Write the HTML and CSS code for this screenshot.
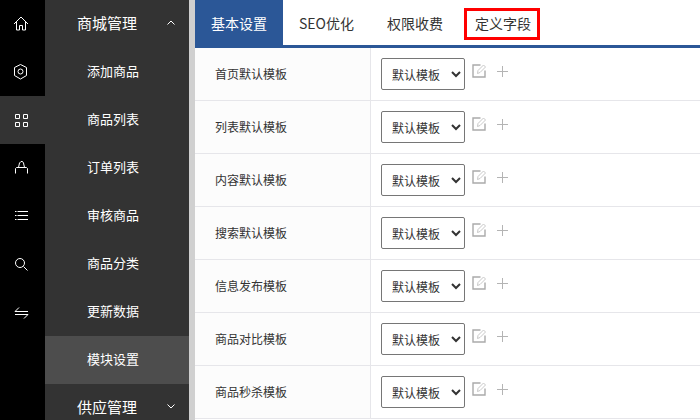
FILE: index.html
```html
<!DOCTYPE html>
<html lang="zh-CN">
<head>
<meta charset="utf-8">
<title>模块设置</title>
<link rel="stylesheet" href="styles.css">
</head>
<body>
<div class="app">
  <nav class="rail">
    <a class="rail-item"><svg viewBox="0 0 16 16" class="ico"><path d="M1 8 8 1 15 8M3.500 6V14H6.500V9.500H9.500V14H12.500V6"/></svg></a>
    <a class="rail-item"><svg viewBox="0 0 16 16" class="ico"><path d="M7.500 0.500 13.500 3.500V11.500L7.500 15 1.500 11.500V3.500Z"/><circle cx="7.500" cy="7.500" r="2.500"/></svg></a>
    <a class="rail-item active"><svg viewBox="0 0 16 16" class="ico"><path d="M2.500 2.500H6.500V6.500H2.500ZM10.500 2.500H14.500V6.500H10.500ZM2.500 10.500H6.500V14.500H2.500ZM10.500 10.500H14.500V14.500H10.500Z"/></svg></a>
    <a class="rail-item"><svg viewBox="0 0 16 16" class="ico"><path d="M2.500 13.500V8.500L3.500 7.500H13.500L14.500 8.500V13.500"/><path d="M5.500 7.500 6.500 3 8 1.500H9.500L10.500 3 11.500 7.500"/></svg></a>
    <a class="rail-item"><svg viewBox="0 0 16 16" class="ico"><path d="M4.500 3.500H15M4.500 7.500H15M4.500 11.500H15M2 3.500H3.500M2 7.500H3.500M2 11.500H3.500"/></svg></a>
    <a class="rail-item"><svg viewBox="0 0 16 16" class="ico"><circle cx="7" cy="7" r="4.500"/><path d="M10.500 10.500 14.500 14.500"/></svg></a>
    <a class="rail-item"><svg viewBox="0 0 16 16" class="ico"><path d="M2 7.500H15M2 7.500 6 3.500M2 10.500H15M15 10.500 11 14.500"/></svg></a>
  </nav>
  <aside class="side">
    <div class="side-head"><span>商城管理</span><svg viewBox="0 0 8 5" class="chev"><path d="M0.500 4.500 4 1 7.500 4.500"/></svg></div>
    <a class="side-item">添加商品</a>
    <a class="side-item">商品列表</a>
    <a class="side-item">订单列表</a>
    <a class="side-item">审核商品</a>
    <a class="side-item">商品分类</a>
    <a class="side-item">更新数据</a>
    <a class="side-item current">模块设置</a>
    <div class="side-head"><span>供应管理</span><svg viewBox="0 0 8 5" class="chev"><path d="M0.500 0.500 4 4 7.500 0.500"/></svg></div>
  </aside>
  <div class="scroll"></div>
  <main class="main">
    <div class="tabs">
      <a class="tab on">基本设置</a>
      <a class="tab">SEO优化</a>
      <a class="tab">权限收费</a>
      <a class="tab marked">定义字段</a>
    </div>
    <div class="rows">
      <div class="row"><div class="label">首页默认模板</div><div class="field"><select class="sel"><option>默认模板</option></select><svg viewBox="0 0 14 14" class="edit"><path class="box" d="M8.500 1H1V13H13V6.500"/><path d="M5.500 9.500 6 6.500 11.500 1 13.500 3 8 8.500Z"/></svg><svg viewBox="0 0 11 11" class="plus"><path d="M5.500 0V11M0 5.500H11"/></svg></div></div>
      <div class="row"><div class="label">列表默认模板</div><div class="field"><select class="sel"><option>默认模板</option></select><svg viewBox="0 0 14 14" class="edit"><path class="box" d="M8.500 1H1V13H13V6.500"/><path d="M5.500 9.500 6 6.500 11.500 1 13.500 3 8 8.500Z"/></svg><svg viewBox="0 0 11 11" class="plus"><path d="M5.500 0V11M0 5.500H11"/></svg></div></div>
      <div class="row"><div class="label">内容默认模板</div><div class="field"><select class="sel"><option>默认模板</option></select><svg viewBox="0 0 14 14" class="edit"><path class="box" d="M8.500 1H1V13H13V6.500"/><path d="M5.500 9.500 6 6.500 11.500 1 13.500 3 8 8.500Z"/></svg><svg viewBox="0 0 11 11" class="plus"><path d="M5.500 0V11M0 5.500H11"/></svg></div></div>
      <div class="row"><div class="label">搜索默认模板</div><div class="field"><select class="sel"><option>默认模板</option></select><svg viewBox="0 0 14 14" class="edit"><path class="box" d="M8.500 1H1V13H13V6.500"/><path d="M5.500 9.500 6 6.500 11.500 1 13.500 3 8 8.500Z"/></svg><svg viewBox="0 0 11 11" class="plus"><path d="M5.500 0V11M0 5.500H11"/></svg></div></div>
      <div class="row"><div class="label">信息发布模板</div><div class="field"><select class="sel"><option>默认模板</option></select><svg viewBox="0 0 14 14" class="edit"><path class="box" d="M8.500 1H1V13H13V6.500"/><path d="M5.500 9.500 6 6.500 11.500 1 13.500 3 8 8.500Z"/></svg><svg viewBox="0 0 11 11" class="plus"><path d="M5.500 0V11M0 5.500H11"/></svg></div></div>
      <div class="row"><div class="label">商品对比模板</div><div class="field"><select class="sel"><option>默认模板</option></select><svg viewBox="0 0 14 14" class="edit"><path class="box" d="M8.500 1H1V13H13V6.500"/><path d="M5.500 9.500 6 6.500 11.500 1 13.500 3 8 8.500Z"/></svg><svg viewBox="0 0 11 11" class="plus"><path d="M5.500 0V11M0 5.500H11"/></svg></div></div>
      <div class="row"><div class="label">商品秒杀模板</div><div class="field"><select class="sel"><option>默认模板</option></select><svg viewBox="0 0 14 14" class="edit"><path class="box" d="M8.500 1H1V13H13V6.500"/><path d="M5.500 9.500 6 6.500 11.500 1 13.500 3 8 8.500Z"/></svg><svg viewBox="0 0 11 11" class="plus"><path d="M5.500 0V11M0 5.500H11"/></svg></div></div>
    </div>
  </main>
</div>
</body>
</html>
```
FILE: styles.css
```css
*, *::after { box-sizing: border-box; }
html, body { margin: 0; padding: 0; height: 100%; overflow: hidden; }
body { font-family: "Noto Sans CJK SC", "Liberation Sans", sans-serif; background: #fff; color: #333; }
.app { display: flex; width: 700px; height: 420px; overflow: hidden; }
.rail { width: 45px; flex: none; background: #000; display: flex; flex-direction: column; }
.rail-item { height: 48px; flex: none; display: flex; align-items: center; padding-left: 13px; }
.rail-item.active { background: #333; }
.ico { width: 16px; height: 16px; fill: none; stroke: #fff; stroke-width: 1; }
.side { width: 144px; flex: none; background: #333; color: #fff; display: flex; flex-direction: column; }
.side-head { height: 48px; flex: none; display: flex; align-items: center; justify-content: space-between; padding: 0 14px 3px 32px; font-size: 15px; }
.chev { width: 8px; height: 5px; fill: none; stroke: #fff; stroke-width: 1; }
.side-item { height: 48px; flex: none; display: flex; align-items: center; padding: 0 0 3px 42px; font-size: 13px; }
.side-item.current { background: #4d4d4d; }
.scroll { width: 6px; flex: none; background: #d0d0d0; }
.main { flex: 1; min-width: 0; display: flex; flex-direction: column; }
.tabs { height: 48px; flex: none; display: flex; border-bottom: 3px solid #2b5797; position: relative; }
.tab { width: 88px; padding-left: 16px; line-height: 47px; height: 45px; font-size: 14px; color: #333; }
.tab.on { background: #2b5797; color: #fff; }
.tab.marked { position: relative; }
.tab.marked::after { content: ""; position: absolute; left: 5px; top: 8px; width: 76px; height: 32px; border: 3px solid #f00; }
.rows { display: flex; flex-direction: column; }
.row { height: 53px; flex: none; display: flex; border-bottom: 1px solid #e6e6ea; }
.label { width: 176px; flex: none; padding-left: 20px; background: #fcfcfc; border-right: 1px solid #e6e6ea; font-size: 12px; line-height: 52px; color: #333; }
.field { flex: 1; display: flex; align-items: flex-start; padding: 10px 0 0 10px; }
.sel { width: 84px; height: 32px; border: 1px solid #767676; border-radius: 2px; background: #fff; padding-left: 6px; font-family: "Noto Sans CJK SC", sans-serif; font-size: 12px; color: #333; }
.edit { width: 14px; height: 14px; margin: 6px 0 0 7px; fill: none; stroke: #c8c8c8; stroke-width: 1; }
.edit .box { stroke: #aaa; stroke-width: 1.400; }
.plus { width: 11px; height: 11px; margin: 8px 0 0 11px; fill: none; stroke: #b4b4b4; stroke-width: 1; }
```
